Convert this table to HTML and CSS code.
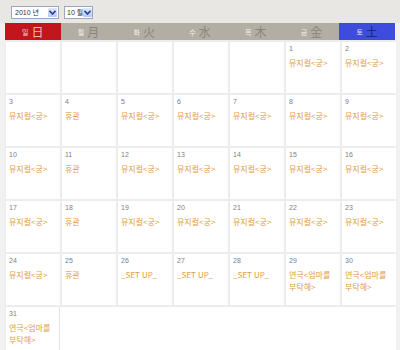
FILE: index.html
```html
<!DOCTYPE html>
<html lang="ko">
<head>
<meta charset="utf-8">
<link rel="stylesheet" href="styles.css">
</head>
<body>
<div class="topbar">
  <div class="sel sel-year"><span class="sel-text">2010 년</span><span class="sel-btn"><svg width="7" height="5" viewBox="0 0 7 5"><path d="M0.5 0.8 L3.5 4 L6.5 0.8" fill="none" stroke="#2b3f8f" stroke-width="1.6"/></svg></span></div>
  <div class="sel sel-month"><span class="sel-text">10 월</span><span class="sel-btn"><svg width="7" height="5" viewBox="0 0 7 5"><path d="M0.5 0.8 L3.5 4 L6.5 0.8" fill="none" stroke="#2b3f8f" stroke-width="1.6"/></svg></span></div>
</div>
<div class="cal">
  <div class="head">
    <div class="hd sun"><span class="ko">일</span><span class="cj">日</span></div>
    <div class="hd"><span class="ko">월</span><span class="cj">月</span></div>
    <div class="hd"><span class="ko">화</span><span class="cj">火</span></div>
    <div class="hd"><span class="ko">수</span><span class="cj">水</span></div>
    <div class="hd"><span class="ko">목</span><span class="cj">木</span></div>
    <div class="hd"><span class="ko">금</span><span class="cj">金</span></div>
    <div class="hd sat"><span class="ko">토</span><span class="cj">土</span></div>
  </div>
  <div class="grid">
    <div class="cell"></div>
    <div class="cell"></div>
    <div class="cell"></div>
    <div class="cell"></div>
    <div class="cell"></div>
    <div class="cell"><div class="num">1</div><div class="ev">뮤지컬&lt;궁&gt;</div></div>
    <div class="cell"><div class="num">2</div><div class="ev">뮤지컬&lt;궁&gt;</div></div>

    <div class="cell"><div class="num">3</div><div class="ev">뮤지컬&lt;궁&gt;</div></div>
    <div class="cell"><div class="num">4</div><div class="ev">휴관</div></div>
    <div class="cell"><div class="num">5</div><div class="ev">뮤지컬&lt;궁&gt;</div></div>
    <div class="cell"><div class="num">6</div><div class="ev">뮤지컬&lt;궁&gt;</div></div>
    <div class="cell"><div class="num">7</div><div class="ev">뮤지컬&lt;궁&gt;</div></div>
    <div class="cell"><div class="num">8</div><div class="ev">뮤지컬&lt;궁&gt;</div></div>
    <div class="cell"><div class="num">9</div><div class="ev">뮤지컬&lt;궁&gt;</div></div>

    <div class="cell"><div class="num">10</div><div class="ev">뮤지컬&lt;궁&gt;</div></div>
    <div class="cell"><div class="num">11</div><div class="ev">휴관</div></div>
    <div class="cell"><div class="num">12</div><div class="ev">뮤지컬&lt;궁&gt;</div></div>
    <div class="cell"><div class="num">13</div><div class="ev">뮤지컬&lt;궁&gt;</div></div>
    <div class="cell"><div class="num">14</div><div class="ev">뮤지컬&lt;궁&gt;</div></div>
    <div class="cell"><div class="num">15</div><div class="ev">뮤지컬&lt;궁&gt;</div></div>
    <div class="cell"><div class="num">16</div><div class="ev">뮤지컬&lt;궁&gt;</div></div>

    <div class="cell"><div class="num">17</div><div class="ev">뮤지컬&lt;궁&gt;</div></div>
    <div class="cell"><div class="num">18</div><div class="ev">휴관</div></div>
    <div class="cell"><div class="num">19</div><div class="ev">뮤지컬&lt;궁&gt;</div></div>
    <div class="cell"><div class="num">20</div><div class="ev">뮤지컬&lt;궁&gt;</div></div>
    <div class="cell"><div class="num">21</div><div class="ev">뮤지컬&lt;궁&gt;</div></div>
    <div class="cell"><div class="num">22</div><div class="ev">뮤지컬&lt;궁&gt;</div></div>
    <div class="cell"><div class="num">23</div><div class="ev">뮤지컬&lt;궁&gt;</div></div>

    <div class="cell"><div class="num">24</div><div class="ev">뮤지컬&lt;궁&gt;</div></div>
    <div class="cell"><div class="num">25</div><div class="ev">휴관</div></div>
    <div class="cell"><div class="num">26</div><div class="ev">_SET UP_</div></div>
    <div class="cell"><div class="num">27</div><div class="ev">_SET UP_</div></div>
    <div class="cell"><div class="num">28</div><div class="ev">_SET UP_</div></div>
    <div class="cell"><div class="num">29</div><div class="ev">연극&lt;엄마를<br>부탁해&gt;</div></div>
    <div class="cell"><div class="num">30</div><div class="ev">연극&lt;엄마를<br>부탁해&gt;</div></div>

    <div class="cell last"><div class="num">31</div><div class="ev">연극&lt;엄마를<br>부탁해&gt;</div></div>
    <div class="cell fill"></div>
  </div>
</div>
</body>
</html>
```
FILE: styles.css
```css
html, body {
  margin: 0;
  padding: 0;
}
body {
  width: 400px;
  height: 350px;
  overflow: hidden;
  background: #f1f1f1;
  font-family: "Noto Sans CJK KR", "Liberation Sans", sans-serif;
}
.topbar {
  height: 23px;
  background: #e8e7e3;
  display: flex;
  align-items: flex-start;
  gap: 5px;
  padding: 6px 0 0 11px;
  box-sizing: border-box;
}
.sel {
  height: 13px;
  box-sizing: border-box;
  border: 1px solid #9aa6bf;
  background: #fff;
  display: flex;
  align-items: center;
  justify-content: space-between;
  padding: 0 1px 0 3px;
  white-space: nowrap;
}
.sel-year { width: 48px; }
.sel-month { width: 29px; padding-left: 2px; }
.sel-text {
  font-family: "Liberation Sans", "Noto Sans CJK KR", sans-serif;
  font-size: 7px;
  color: #333;
  line-height: 1;
  white-space: nowrap;
}
.sel-btn {
  flex: none;
  width: 9px;
  height: 9px;
  background: linear-gradient(#dfe8fb, #b7c9f0);
  border-radius: 1px;
  display: flex;
  align-items: center;
  justify-content: center;
}
.cal {
  width: 390px;
  margin-left: 5px;
  background: #ececec;
}
.head {
  display: grid;
  grid-template-columns: repeat(7, 1fr);
  height: 17px;
}
.hd {
  background: #b3aea4;
  display: flex;
  align-items: center;
  justify-content: center;
  gap: 1px;
}
.hd .ko {
  font-size: 7px;
  color: #f4f2ee;
  margin-right: 2px;
}
.hd .cj {
  font-size: 12px;
  color: #8a857b;
  line-height: 1;
}
.hd.sun { background: #c1161e; }
.hd.sun .ko { color: #f7d3d3; }
.hd.sun .cj { color: #f0b8b8; }
.hd.sat { background: #3d4cdc; }
.hd.sat .ko { color: #e8eaff; }
.hd.sat .cj { color: #16207e; }
.grid {
  display: grid;
  grid-template-columns: repeat(7, 54px);
  grid-auto-rows: 51px;
  column-gap: 2px;
  row-gap: 2px;
  padding: 2px 0 0 1px;
}
.cell {
  background: #fff;
  padding: 3px 0 0 3px;
  box-sizing: border-box;
}
.num {
  font-family: "Liberation Sans", sans-serif;
  font-size: 7px;
  color: #808080;
  line-height: 8px;
}
.ev {
  margin-top: 4px;
  font-size: 8px;
  color: #dc9d3f;
  line-height: 12px;
  letter-spacing: 0;
}
.cell.last { border-right: 1px solid #e4e4e4; }
.cell.fill {
  grid-column: 2 / 8;
  margin-left: -2px;
}
```
